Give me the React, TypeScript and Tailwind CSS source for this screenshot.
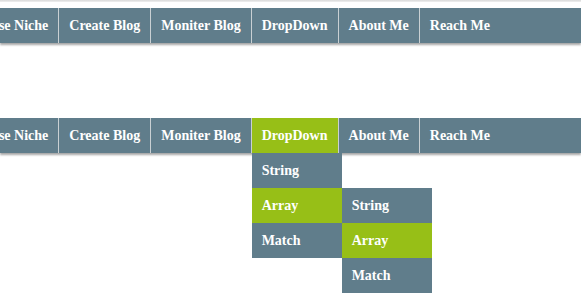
import React from "react";

const items = ["Choose Niche", "Create Blog", "Moniter Blog", "DropDown", "About Me", "Reach Me"];
const subItems = ["String", "Array", "Match"];

type BarProps = { open?: boolean };

const NavBar: React.FC<BarProps> = ({ open }) => {
  return (
    <div className="relative h-[35px] w-full bg-[#607d8b] shadow-[0_2px_2px_rgba(0,0,0,0.35)]">
      <ul className="flex h-full ml-[-43px]">
        {items.map((item, index) => {
          const active = open && item === "DropDown";
          return (
            <li
              key={item}
              className={`relative h-full px-[10px] leading-[35px] whitespace-nowrap ${
                index < items.length - 1 ? "border-r border-[#c9d0d3]" : ""
              } ${active ? "bg-[#97bf17]" : ""}`}
            >
              {item}
              {active && (
                <ul className="absolute left-0 top-full w-[90px]">
                  {subItems.map((sub) => (
                    <li
                      key={sub}
                      className={`relative h-[35px] px-[10px] leading-[35px] ${
                        sub === "Array" ? "bg-[#97bf17]" : "bg-[#607d8b]"
                      }`}
                    >
                      {sub}
                      {sub === "Array" && (
                        <ul className="absolute left-full top-0 w-[90px]">
                          {subItems.map((s) => (
                            <li
                              key={s}
                              className={`h-[35px] px-[10px] leading-[35px] ${
                                s === "Array" ? "bg-[#97bf17]" : "bg-[#607d8b]"
                              }`}
                            >
                              {s}
                            </li>
                          ))}
                        </ul>
                      )}
                    </li>
                  ))}
                </ul>
              )}
            </li>
          );
        })}
      </ul>
    </div>
  );
};

export default function App() {
  return (
    <div
      className="w-[581px] h-[305px] overflow-hidden bg-white text-white text-[14px] font-bold"
      style={{ fontFamily: '"Liberation Serif", "Times New Roman", serif' }}
    >
      <div className="h-[2px] bg-gradient-to-b from-[#d9d9d9] to-[#f0f0f0]" />
      <div className="pt-[6px]">
        <NavBar />
      </div>
      <div className="mt-[75px]">
        <NavBar open />
      </div>
    </div>
  );
}
